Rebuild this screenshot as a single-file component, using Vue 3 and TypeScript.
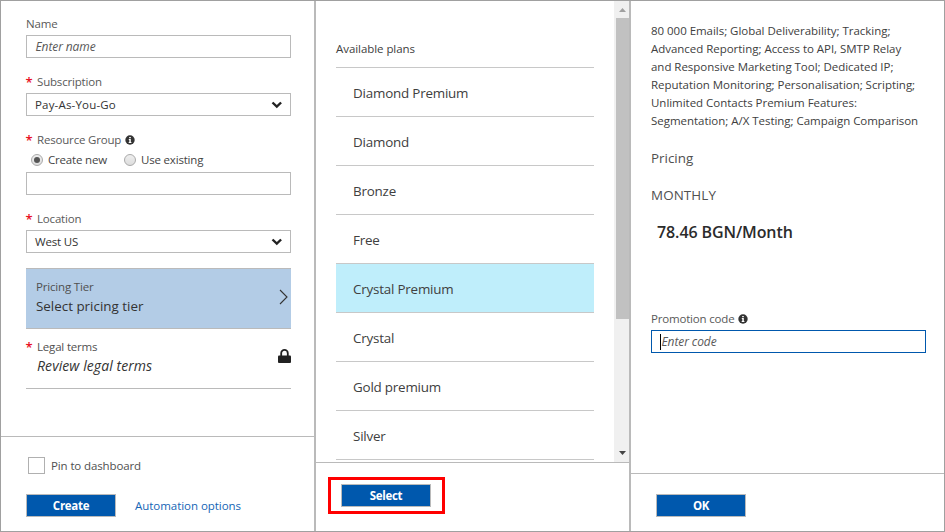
<script setup lang="ts">
import { ref } from 'vue'

const plans: string[] = [
  'Diamond Premium',
  'Diamond',
  'Bronze',
  'Free',
  'Crystal Premium',
  'Crystal',
  'Gold premium',
  'Silver',
]
const selectedPlan = ref('Crystal Premium')
const groupMode = ref<'new' | 'existing'>('new')

const description: string[] = [
  '80 000 Emails; Global Deliverability; Tracking;',
  'Advanced Reporting; Access to API, SMTP Relay',
  'and Responsive Marketing Tool; Dedicated IP;',
  'Reputation Monitoring; Personalisation; Scripting;',
  'Unlimited Contacts Premium Features:',
  'Segmentation; A/X Testing; Campaign Comparison',
]
</script>

<template>
  <div class="frame">
    <section class="blade">
      <div class="form">
        <div class="label">Name</div>
        <div class="field"><em>Enter name</em></div>

        <div class="label required">Subscription</div>
        <div class="field select">
          <span class="wide">Pay-As-You-Go</span>
          <svg class="chevron" viewBox="0 0 12 8"><path d="M1.5 1.5 L5.8 5.6 L10.1 1.5" /></svg>
        </div>

        <div class="label required">
          Resource Group
          <svg class="info" viewBox="0 0 10 10"><circle cx="5" cy="5" r="4.7" /><path d="M4.2 2h1.6v1.3H4.2zM3.8 4.1h2v3h.6v.9H3.7v-.9h.6V5h-.5z" /></svg>
        </div>
        <div class="radios">
          <span class="option" @click="groupMode = 'new'">
            <i class="radio" :class="{ on: groupMode === 'new' }"></i>Create new
          </span>
          <span class="option" @click="groupMode = 'existing'">
            <i class="radio" :class="{ on: groupMode === 'existing' }"></i>Use existing
          </span>
        </div>
        <div class="field"></div>

        <div class="label required">Location</div>
        <div class="field select">
          <span>West US</span>
          <svg class="chevron" viewBox="0 0 12 8"><path d="M1.5 1.5 L5.8 5.6 L10.1 1.5" /></svg>
        </div>

        <div class="tile tier">
          <div class="tile-text">
            <div class="tile-label">Pricing Tier</div>
            <div class="tile-value">Select pricing tier</div>
          </div>
          <svg class="next" viewBox="0 0 9 16"><path d="M1 1 L8 8 L1 15" /></svg>
        </div>
        <div class="tile legal">
          <div class="tile-text">
            <div class="tile-label required">Legal terms</div>
            <div class="tile-value italic">Review legal terms</div>
          </div>
          <svg class="lock" viewBox="0 0 13 14"><path d="M3.2 7V4.2a3.3 3.3 0 0 1 6.6 0V7" /><rect x="0" y="6.4" width="13" height="7.6" rx="1" /></svg>
        </div>
      </div>
      <footer class="foot create-foot">
        <label class="pin"><i class="check"></i>Pin to dashboard</label>
        <div class="actions">
          <button class="primary">Create</button>
          <a class="link">Automation options</a>
        </div>
      </footer>
    </section>

    <section class="blade">
      <div class="scroll-area">
        <div class="plans">
          <div class="plans-title">Available plans</div>
          <div
            v-for="plan in plans"
            :key="plan"
            class="plan"
            :class="{ selected: plan === selectedPlan }"
            @click="selectedPlan = plan"
          >{{ plan }}</div>
        </div>
        <div class="scrollbar">
          <svg class="arrow up" viewBox="0 0 7 4"><path d="M0 4 L3.5 0 L7 4z" /></svg>
          <div class="thumb"></div>
          <svg class="arrow down" viewBox="0 0 7 4"><path d="M0 0 L3.5 4 L7 0z" /></svg>
        </div>
      </div>
      <footer class="foot select-foot">
        <div class="highlight"><button class="primary">Select</button></div>
      </footer>
    </section>

    <section class="blade">
      <div class="details">
        <p class="description"><span v-for="line in description" :key="line">{{ line }}</span></p>
        <div class="heading">Pricing</div>
        <div class="heading period">MONTHLY</div>
        <div class="price">78.46 BGN/Month</div>
        <div class="label promo">
          Promotion code
          <svg class="info" viewBox="0 0 10 10"><circle cx="5" cy="5" r="4.7" /><path d="M4.2 2h1.6v1.3H4.2zM3.8 4.1h2v3h.6v.9H3.7v-.9h.6V5h-.5z" /></svg>
        </div>
        <div class="field focused"><i class="caret"></i><em>Enter code</em></div>
      </div>
      <footer class="foot ok-foot"><button class="primary">OK</button></footer>
    </section>
  </div>
</template>

<style>
body {
  margin: 0;
  background: #fff;
}
</style>

<style scoped>
* {
  box-sizing: border-box;
}
.frame {
  display: grid;
  grid-template-columns: 315px 315px 313px;
  width: 945px;
  height: 532px;
  border: 1px solid #a0a0a0;
  background: #fff;
  font: 11.5px/16px "Open Sans", "Noto Sans", sans-serif;
  letter-spacing: -0.18px;
  color: #333;
  overflow: hidden;
}
.blade {
  display: flex;
  flex-direction: column;
  height: 530px;
  min-width: 0;
  border-right: 2px solid #bababa;
}
.blade:last-child {
  border-right: 0;
}
.form {
  flex: 1;
  padding: 15px 23px 0 25px;
}
.label {
  display: flex;
  align-items: center;
  height: 16px;
  margin-bottom: 3px;
  color: #595959;
}
.required::before {
  content: "*";
  width: 11px;
  flex: none;
  height: 16px;
  font-size: 13px;
  font-weight: 600;
  line-height: 17px;
  letter-spacing: 0;
  text-indent: -0.5px;
  color: #e81123;
}
.field {
  display: flex;
  align-items: center;
  width: 265px;
  height: 23px;
  margin-bottom: 16px;
  padding: 0 8px;
  border: 1px solid #bababa;
}
.field em {
  padding-left: 0.5px;
  font-size: 12px;
  letter-spacing: -0.1px;
  color: #595959;
}
.select {
  justify-content: space-between;
}
.select .wide {
  letter-spacing: 0.18px;
}
.chevron {
  width: 12px;
  height: 8px;
  margin-right: -1px;
  fill: none;
  stroke: #222;
  stroke-width: 2.4;
}
.info {
  width: 10px;
  height: 10px;
  margin-left: 4px;
  fill: #333;
}
.info path {
  fill: #fff;
}
.radios {
  display: flex;
  gap: 17px;
  height: 16px;
  margin: 4px 0 4px 5px;
}
.option {
  display: flex;
  align-items: center;
  color: #444;
}
.radio {
  display: flex;
  width: 12px;
  height: 12px;
  margin-right: 5px;
  border: 1px solid #aaa;
  border-radius: 50%;
  background: linear-gradient(#eee, #ddd);
}
.radio.on::after {
  content: "";
  width: 6px;
  height: 6px;
  margin: 2px;
  border-radius: 50%;
  background: #555;
}
.tile {
  display: flex;
  justify-content: space-between;
  align-items: center;
  width: 265px;
  border-bottom: 1px solid #bababa;
}
.tier {
  height: 61px;
  margin-top: -1px;
  padding: 0 3px 2px 10px;
  border-top: 1px solid #bababa;
  background: #b3cce6;
}
.legal {
  height: 60px;
  padding-bottom: 3px;
}
.tile-text {
  flex: 1;
}
.tile-label {
  display: flex;
  align-items: center;
  height: 16px;
  color: #505050;
}
.tile-value {
  height: 20px;
  margin-top: 2px;
  font-size: 13.4px;
  line-height: 19px;
  letter-spacing: 0;
  color: #333;
}
.tile-value.italic {
  margin-top: 1px;
  padding-left: 11px;
  font-size: 14px;
  font-style: italic;
  letter-spacing: 0.08px;
}
.next {
  width: 9px;
  height: 16px;
  margin-top: -2px;
  fill: none;
  stroke: #333;
  stroke-width: 1.1;
}
.lock {
  width: 13px;
  height: 14px;
  margin-bottom: 3px;
  fill: #222;
}
.lock path {
  fill: none;
  stroke: #222;
  stroke-width: 1.8;
}
.foot {
  flex: none;
  border-top: 1px solid #bababa;
}
.create-foot {
  height: 95px;
  padding: 20px 0 0 25px;
}
.pin {
  display: flex;
  align-items: center;
  height: 17px;
  margin-left: 2px;
  letter-spacing: -0.12px;
  color: #505050;
}
.check {
  width: 17px;
  height: 17px;
  margin-right: 6px;
  border: 1px solid #b0b0b0;
}
.actions {
  display: flex;
  align-items: center;
  gap: 19px;
  margin-top: 20px;
}
.primary {
  display: block;
  width: 90px;
  height: 23px;
  padding: 0;
  border: 1px solid #bababa;
  background: #0058ad;
  color: #fff;
  font: bold 11.5px/19px "Open Sans", "Noto Sans", sans-serif;
  letter-spacing: -0.3px;
}
.link {
  letter-spacing: -0.04px;
  color: #1565b5;
}
.scroll-area {
  display: flex;
  flex: 1;
  min-height: 0;
}
.plans {
  flex: 1;
  padding: 40px 20px 0;
}
.plans-title {
  height: 26px;
  letter-spacing: -0.06px;
  color: #404040;
}
.plan {
  height: 49px;
  padding-left: 17px;
  border-top: 1px solid #c8c8c8;
  font-size: 13.4px;
  line-height: 50px;
  letter-spacing: -0.2px;
  color: #404040;
}
.plan:last-child {
  height: 50px;
  border-bottom: 1px solid #c8c8c8;
}
.plan.selected {
  background: #bfeefb;
}
.scrollbar {
  display: flex;
  flex-direction: column;
  align-items: center;
  justify-content: space-between;
  width: 15px;
  padding: 7px 0;
  background: #f0f0f0;
}
.thumb {
  align-self: flex-end;
  width: 13px;
  height: 301px;
  margin: 6px 0 auto;
  background: #c1c1c1;
}
.arrow {
  width: 7px;
  height: 4px;
  margin-left: 2px;
}
.up {
  fill: #a0a0a0;
}
.down {
  fill: #444;
}
.select-foot {
  height: 69px;
  padding: 14px 0 0 12px;
}
.highlight {
  width: 117px;
  height: 37px;
  padding: 4px 0 0 10px;
  border: 3px solid #f00;
}
.details {
  flex: 1;
  padding: 21px 18px 0 20px;
}
.description {
  margin: 0;
  line-height: 18px;
  letter-spacing: -0.03px;
  color: #404040;
}
.description span {
  display: block;
  white-space: nowrap;
}
.heading {
  height: 20px;
  margin-top: 18px;
  font-size: 13.4px;
  line-height: 20px;
  letter-spacing: 0;
  color: #505050;
}
.period {
  margin-top: 17px;
  letter-spacing: 0.1px;
}
.price {
  height: 24px;
  margin: 15px 0 0 6px;
  font-size: 16px;
  font-weight: 600;
  line-height: 24px;
  letter-spacing: -0.1px;
  color: #2b2b2b;
}
.promo {
  margin: 67px 0 3px;
}
.focused {
  width: 275px;
  border-color: #0058ad;
}
.caret {
  width: 1px;
  height: 16px;
  background: #000;
}
.ok-foot {
  height: 58px;
  padding: 20px 0 0 25px;
}
</style>
